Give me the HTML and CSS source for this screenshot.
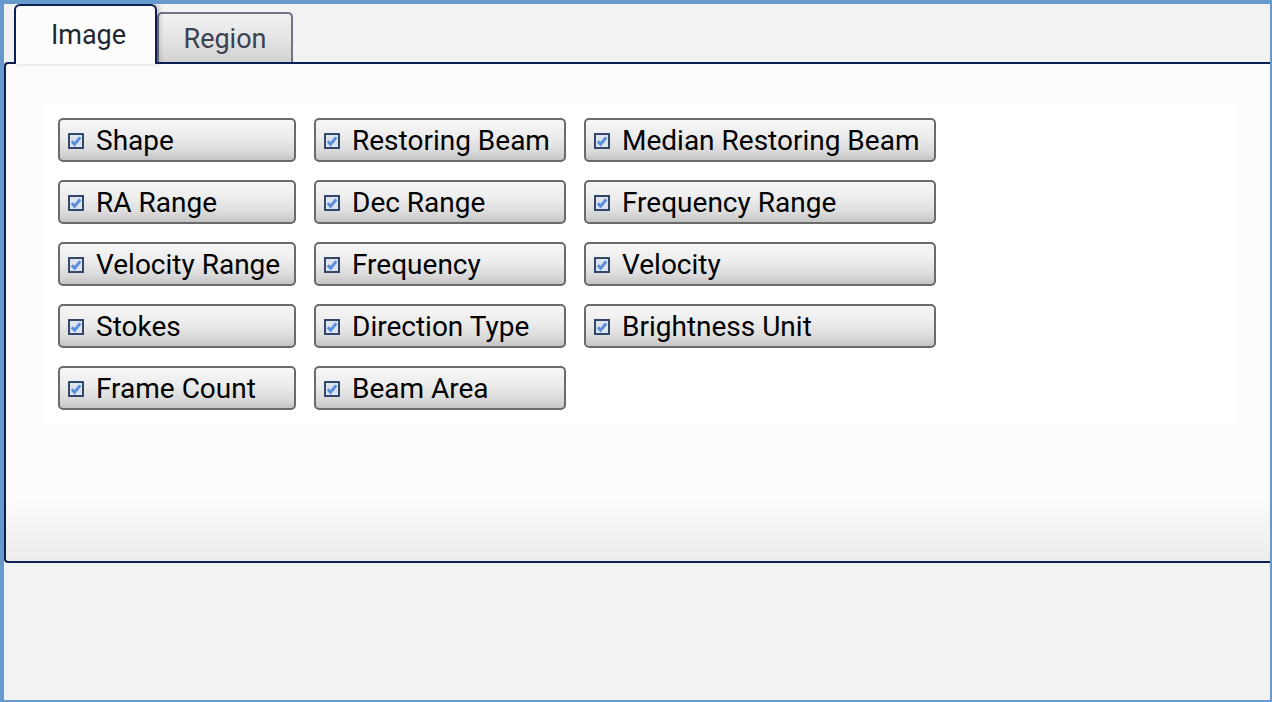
FILE: index.html
```html
<!DOCTYPE html>
<html>
<head>
<meta charset="utf-8">
<link rel="stylesheet" href="styles.css">
</head>
<body>
<div class="frame">
  <div class="tabs">
    <div class="tab tab-active">Image</div>
    <div class="tab tab-inactive">Region</div>
  </div>
  <div class="panel">
    <div class="options">
      <label class="opt"><span class="cb"><svg width="16" height="16" viewBox="0 0 16 16"><rect x="1" y="1" width="14" height="14" fill="#dde4ee" stroke="#33476b" stroke-width="2"/><path d="M3.8 8.2 L6.6 11.2 L12.2 4.4" fill="none" stroke="#5a8ddb" stroke-width="3"/></svg></span>Shape</label>
      <label class="opt"><span class="cb"><svg width="16" height="16" viewBox="0 0 16 16"><rect x="1" y="1" width="14" height="14" fill="#dde4ee" stroke="#33476b" stroke-width="2"/><path d="M3.8 8.2 L6.6 11.2 L12.2 4.4" fill="none" stroke="#5a8ddb" stroke-width="3"/></svg></span>Restoring Beam</label>
      <label class="opt"><span class="cb"><svg width="16" height="16" viewBox="0 0 16 16"><rect x="1" y="1" width="14" height="14" fill="#dde4ee" stroke="#33476b" stroke-width="2"/><path d="M3.8 8.2 L6.6 11.2 L12.2 4.4" fill="none" stroke="#5a8ddb" stroke-width="3"/></svg></span>Median Restoring Beam</label>
      <label class="opt"><span class="cb"><svg width="16" height="16" viewBox="0 0 16 16"><rect x="1" y="1" width="14" height="14" fill="#dde4ee" stroke="#33476b" stroke-width="2"/><path d="M3.8 8.2 L6.6 11.2 L12.2 4.4" fill="none" stroke="#5a8ddb" stroke-width="3"/></svg></span>RA Range</label>
      <label class="opt"><span class="cb"><svg width="16" height="16" viewBox="0 0 16 16"><rect x="1" y="1" width="14" height="14" fill="#dde4ee" stroke="#33476b" stroke-width="2"/><path d="M3.8 8.2 L6.6 11.2 L12.2 4.4" fill="none" stroke="#5a8ddb" stroke-width="3"/></svg></span>Dec Range</label>
      <label class="opt"><span class="cb"><svg width="16" height="16" viewBox="0 0 16 16"><rect x="1" y="1" width="14" height="14" fill="#dde4ee" stroke="#33476b" stroke-width="2"/><path d="M3.8 8.2 L6.6 11.2 L12.2 4.4" fill="none" stroke="#5a8ddb" stroke-width="3"/></svg></span>Frequency Range</label>
      <label class="opt"><span class="cb"><svg width="16" height="16" viewBox="0 0 16 16"><rect x="1" y="1" width="14" height="14" fill="#dde4ee" stroke="#33476b" stroke-width="2"/><path d="M3.8 8.2 L6.6 11.2 L12.2 4.4" fill="none" stroke="#5a8ddb" stroke-width="3"/></svg></span>Velocity Range</label>
      <label class="opt"><span class="cb"><svg width="16" height="16" viewBox="0 0 16 16"><rect x="1" y="1" width="14" height="14" fill="#dde4ee" stroke="#33476b" stroke-width="2"/><path d="M3.8 8.2 L6.6 11.2 L12.2 4.4" fill="none" stroke="#5a8ddb" stroke-width="3"/></svg></span>Frequency</label>
      <label class="opt"><span class="cb"><svg width="16" height="16" viewBox="0 0 16 16"><rect x="1" y="1" width="14" height="14" fill="#dde4ee" stroke="#33476b" stroke-width="2"/><path d="M3.8 8.2 L6.6 11.2 L12.2 4.4" fill="none" stroke="#5a8ddb" stroke-width="3"/></svg></span>Velocity</label>
      <label class="opt"><span class="cb"><svg width="16" height="16" viewBox="0 0 16 16"><rect x="1" y="1" width="14" height="14" fill="#dde4ee" stroke="#33476b" stroke-width="2"/><path d="M3.8 8.2 L6.6 11.2 L12.2 4.4" fill="none" stroke="#5a8ddb" stroke-width="3"/></svg></span>Stokes</label>
      <label class="opt"><span class="cb"><svg width="16" height="16" viewBox="0 0 16 16"><rect x="1" y="1" width="14" height="14" fill="#dde4ee" stroke="#33476b" stroke-width="2"/><path d="M3.8 8.2 L6.6 11.2 L12.2 4.4" fill="none" stroke="#5a8ddb" stroke-width="3"/></svg></span>Direction Type</label>
      <label class="opt"><span class="cb"><svg width="16" height="16" viewBox="0 0 16 16"><rect x="1" y="1" width="14" height="14" fill="#dde4ee" stroke="#33476b" stroke-width="2"/><path d="M3.8 8.2 L6.6 11.2 L12.2 4.4" fill="none" stroke="#5a8ddb" stroke-width="3"/></svg></span>Brightness Unit</label>
      <label class="opt"><span class="cb"><svg width="16" height="16" viewBox="0 0 16 16"><rect x="1" y="1" width="14" height="14" fill="#dde4ee" stroke="#33476b" stroke-width="2"/><path d="M3.8 8.2 L6.6 11.2 L12.2 4.4" fill="none" stroke="#5a8ddb" stroke-width="3"/></svg></span>Frame Count</label>
      <label class="opt"><span class="cb"><svg width="16" height="16" viewBox="0 0 16 16"><rect x="1" y="1" width="14" height="14" fill="#dde4ee" stroke="#33476b" stroke-width="2"/><path d="M3.8 8.2 L6.6 11.2 L12.2 4.4" fill="none" stroke="#5a8ddb" stroke-width="3"/></svg></span>Beam Area</label>
    </div>
  </div>
</div>
</body>
</html>
```
FILE: styles.css
```css
html, body {
  margin: 0;
  padding: 0;
}
body {
  font-family: Roboto, "Liberation Sans", sans-serif;
  background: #f2f2f2;
}
.frame {
  width: 1272px;
  height: 702px;
  box-sizing: border-box;
  border-style: solid;
  border-color: #6699cc;
  border-width: 4px 2px 2px 4px;
  background: #f2f2f2;
  overflow: hidden;
}
.tabs {
  display: flex;
  align-items: flex-end;
  height: 58px;
  padding-left: 10px;
  position: relative;
  z-index: 1;
}
.tab {
  box-sizing: border-box;
  display: flex;
  align-items: center;
  justify-content: center;
  font-size: 27px;
}
.tab-active {
  width: 143px;
  height: 60px;
  margin-bottom: -2px;
  padding: 0 0 0 6px;
  border: 2px solid #0b1f52;
  border-bottom: none;
  border-radius: 6px 6px 0 0;
  background: #fcfcfc;
  color: #1f2733;
  box-shadow: 3px 0 4px rgba(0, 0, 0, 0.18);
  position: relative;
  z-index: 2;
}
.tab-inactive {
  width: 136px;
  height: 50px;
  padding-top: 2px;
  border: 2px solid #6e7487;
  border-bottom: none;
  border-radius: 5px 5px 0 0;
  background: linear-gradient(#f1f1f1, #e6e6e6 45%, #d2d2d2);
  color: #3b4252;
}
.panel {
  box-sizing: border-box;
  height: 501px;
  margin-right: -4px;
  border: 2px solid #0b1f52;
  border-right: none;
  border-radius: 4px 0 0 4px;
  background: linear-gradient(#fcfcfc, #fcfcfc 87%, #f4f4f4 93%, #ececec);
  padding: 40px 0 0 38px;
}
.options {
  box-sizing: border-box;
  width: 1194px;
  height: 320px;
  background: #ffffff;
  padding: 14px;
  display: grid;
  grid-template-columns: 238px 252px 352px;
  grid-auto-rows: 44px;
  gap: 18px;
  align-content: start;
}
.opt {
  box-sizing: border-box;
  display: flex;
  align-items: center;
  gap: 12px;
  padding-left: 8px;
  border: 2px solid #6a6a6a;
  border-radius: 5px;
  background: linear-gradient(#f6f6f6, #ededed 40%, #dcdcdc 75%, #c4c4c4);
  font-size: 28px;
  color: #000;
  white-space: nowrap;
}
.cb {
  display: flex;
  width: 16px;
  height: 16px;
  margin-top: 2px;
}
```
